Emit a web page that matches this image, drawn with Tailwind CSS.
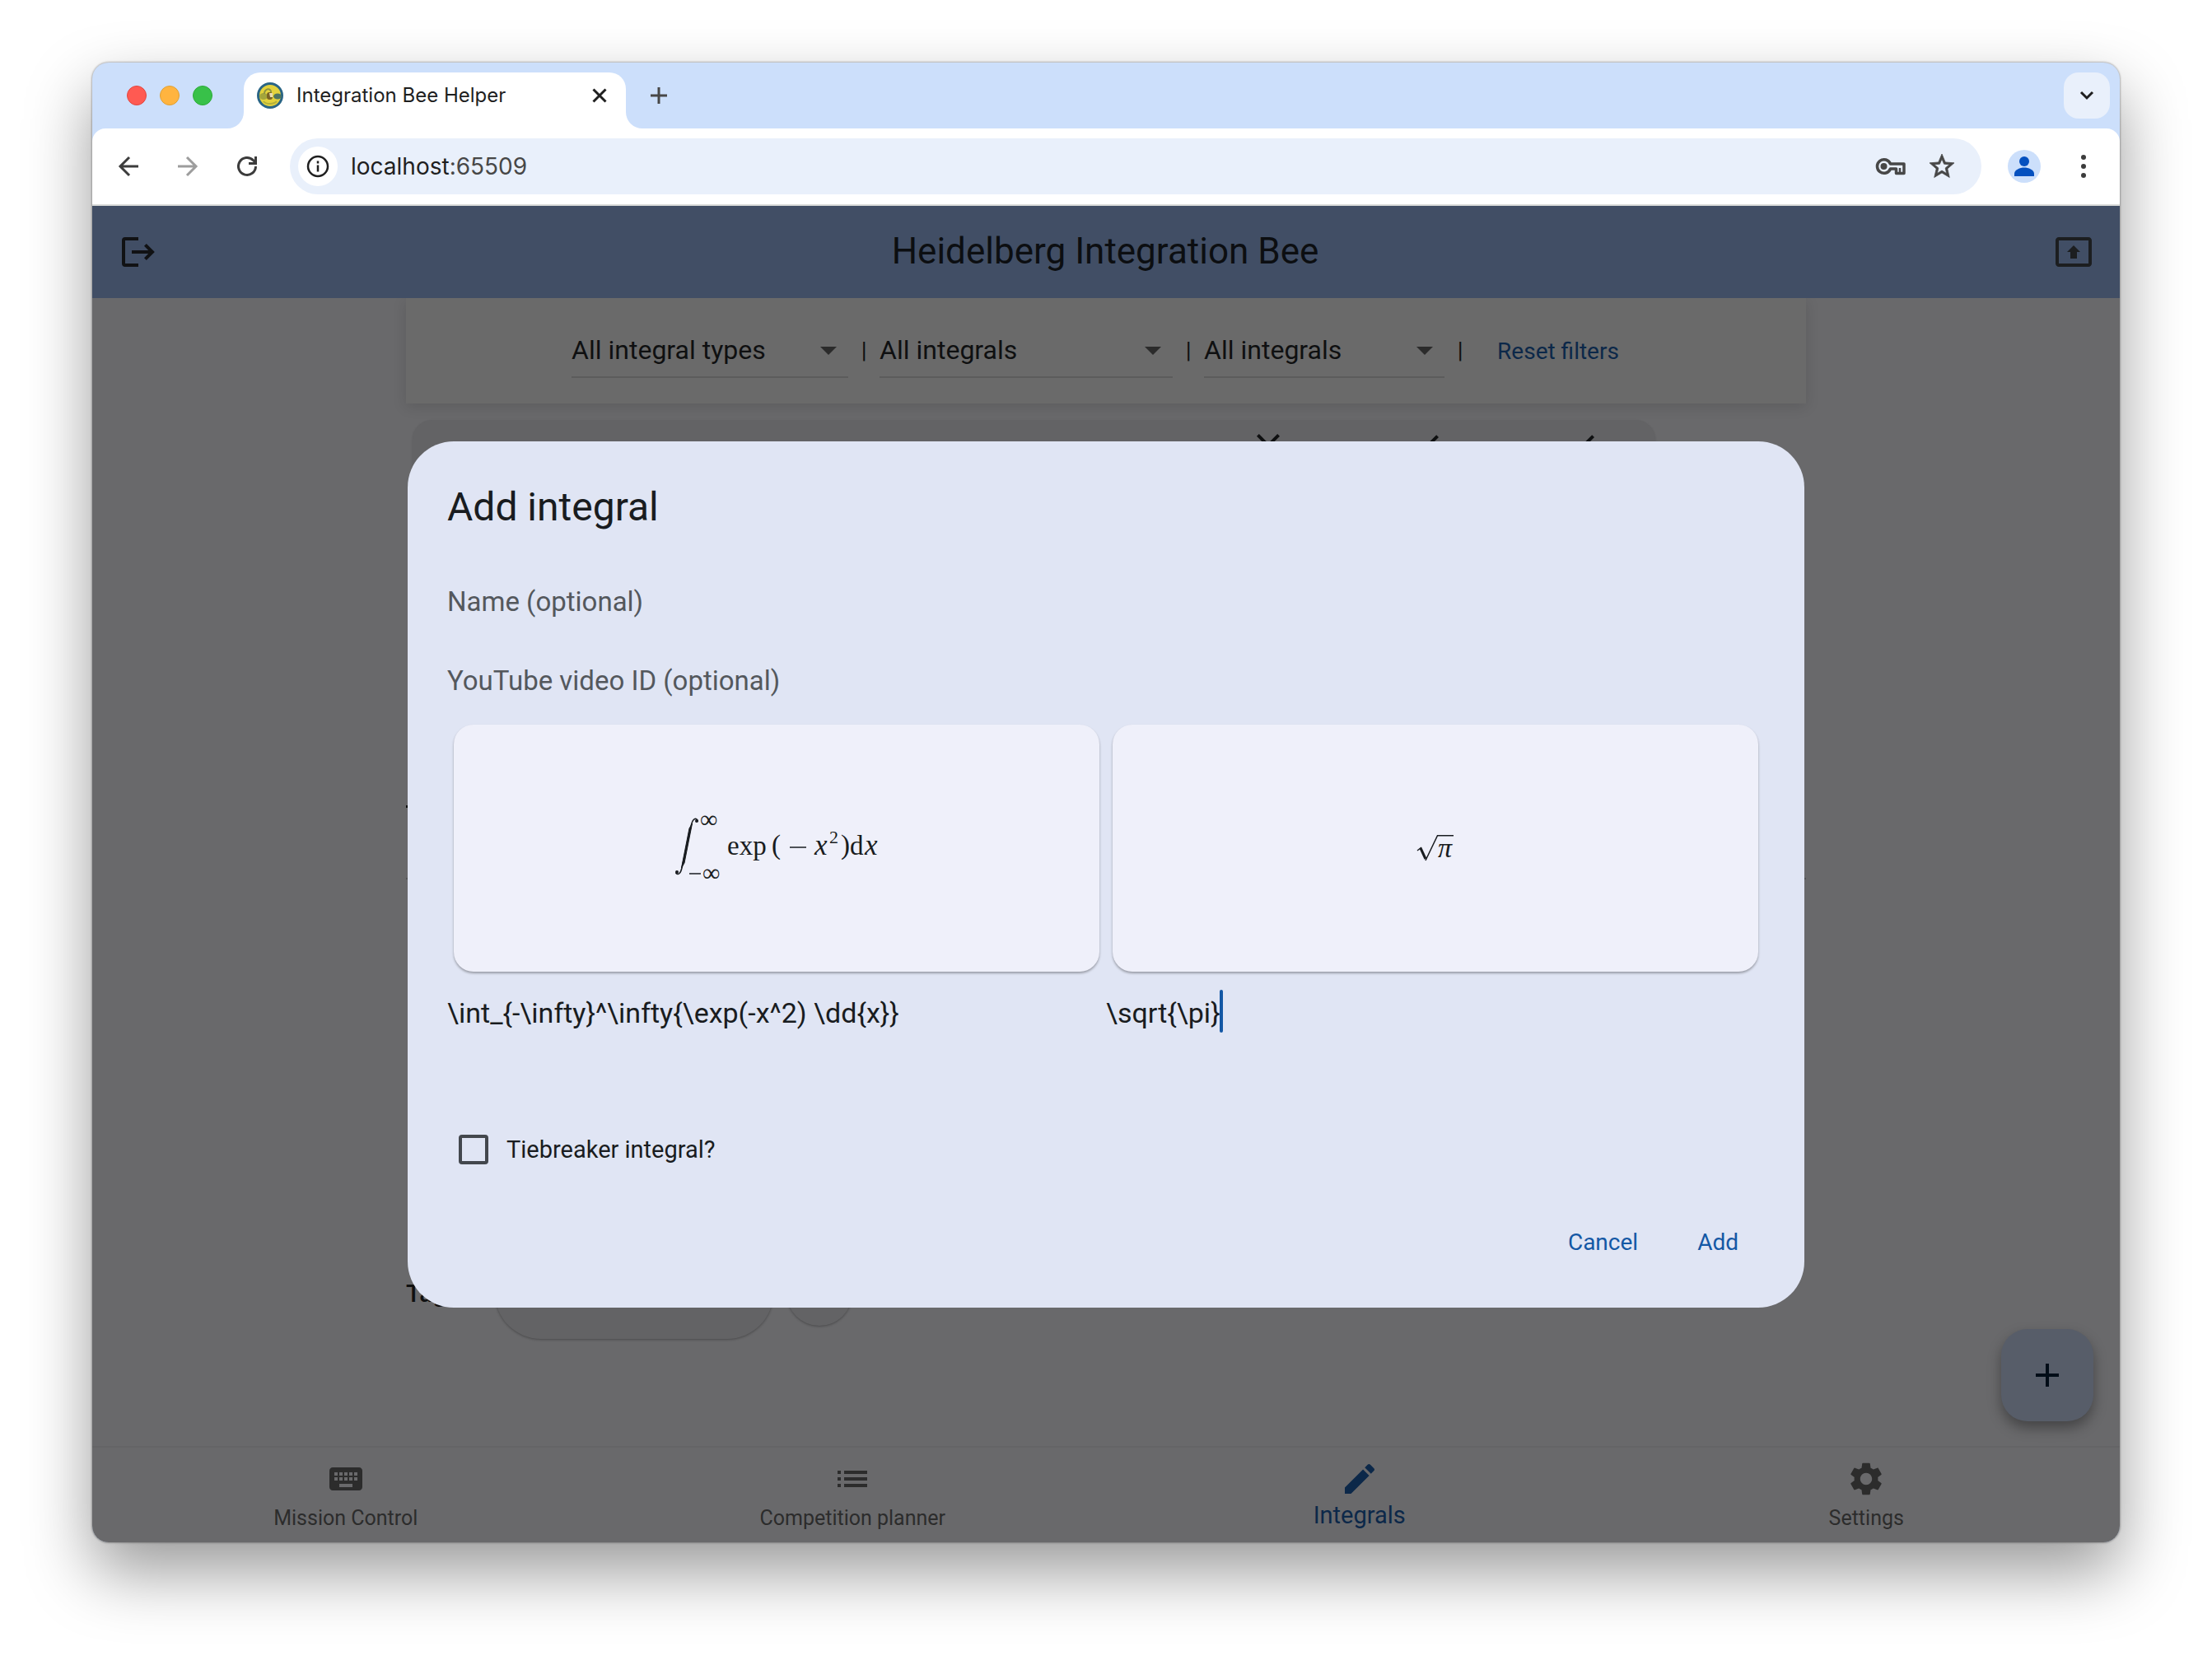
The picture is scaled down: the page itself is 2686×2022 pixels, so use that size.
<!DOCTYPE html>
<html lang="en">
<head>
<meta charset="utf-8">
<title>Integration Bee Helper</title>
<script src="https://cdn.jsdelivr.net/npm/@tailwindcss/browser@4"></script>
</head>
<body class="bg-white">
<div class="flex min-h-screen flex-col px-28 pt-[76px] pb-[149px] font-[Roboto,sans-serif] text-[#191c20]">
  <div class="relative flex flex-1 flex-col overflow-hidden rounded-[20px] bg-[#ccdffb] shadow-[0_0_2px_1px_rgba(0,0,0,0.25),0_36px_80px_rgba(0,0,0,0.4)]">

    <!-- Tab strip -->
    <header class="flex h-20 items-end pr-3 font-[Inter,sans-serif]">
      <div class="flex h-full w-[184px] items-center gap-4 pl-[42px]">
        <span class="size-6 rounded-full border border-[#e2463f] bg-[#ff5a52]"></span>
        <span class="size-6 rounded-full border border-[#e0a033] bg-[#ffb43f]"></span>
        <span class="size-6 rounded-full border border-[#2dab38] bg-[#38c149]"></span>
      </div>
      <div class="relative flex h-[68px] w-[464px] items-center rounded-t-[20px] bg-white pr-5 pb-3 pl-4">
        <svg class="absolute bottom-0 -left-5 size-5" viewBox="0 0 20 20" fill="#fff"><path d="M20 0v20H0A20 20 0 0 0 20 0z"/></svg>
        <svg class="absolute -right-5 bottom-0 size-5" viewBox="0 0 20 20" fill="#fff"><path d="M0 0v20h20A20 20 0 0 1 0 0z"/></svg>
        <svg class="size-8" viewBox="0 0 32 32"><circle cx="16" cy="16" r="14.500" fill="#e3d23c" stroke="#2a6585" stroke-width="3"/><ellipse cx="8" cy="17" rx="5" ry="4" fill="#a3a53c"/><ellipse cx="25" cy="17" rx="5" ry="3.500" fill="#4f7560"/><path d="M9 14c0-6 7-8 8-3v3" fill="none" stroke="#8d9440" stroke-width="2"/><rect x="12" y="12" width="7" height="9" rx="3" fill="#7b6424"/><path d="M15 13h4v5h-3z" fill="#e9dcb0"/><path d="M8 23c3 4 12 4 16 0" fill="none" stroke="#b4b13a" stroke-width="2"/></svg>
        <span class="ml-4 flex-1 text-2xl text-[#1f1f1f]">Integration Bee Helper</span>
        <button aria-label="Close tab" class="flex size-6 items-center justify-center"><svg class="size-6" viewBox="0 0 24 24" fill="none" stroke="#1f1f1f" stroke-width="3"><path d="M4.500 4.500l15 15M19.500 4.500l-15 15"/></svg></button>
      </div>
      <button aria-label="New tab" class="mb-6 ml-6 flex size-8 items-center justify-center"><svg class="size-6" viewBox="0 0 24 24" fill="none" stroke="#474747" stroke-width="3"><path d="M12 2v20M2 12h20"/></svg></button>
      <button aria-label="Search tabs" class="mb-3 ml-auto flex size-14 items-center justify-center rounded-[18px] bg-[#e9f0fb]"><svg class="size-6" viewBox="0 0 24 24" fill="none" stroke="#1f1f1f" stroke-width="3"><path d="M5 8l7 7 7-7"/></svg></button>
    </header>

    <!-- Toolbar -->
    <div class="flex h-[94px] items-center rounded-t-[16px] border-b-2 border-[#dadcda] bg-white pr-7 pl-7 font-[Inter,sans-serif]">
      <button aria-label="Back" class="size-8"><svg viewBox="0 0 32 32" fill="none" stroke="#3c3c3c" stroke-width="3"><path d="M28 16H6M17 5L6 16l11 11"/></svg></button>
      <button aria-label="Forward" class="ml-10 size-8"><svg viewBox="0 0 32 32" fill="none" stroke="#9d9d9d" stroke-width="3"><path d="M4 16h22M15 5l11 11-11 11"/></svg></button>
      <button aria-label="Reload" class="ml-10 size-8"><svg viewBox="0 0 32 32" fill="none" stroke="#3c3c3c" stroke-width="3"><path d="M26.500 16a10.500 10.500 0 1 1-3-7.400L26 11"/><path d="M26.500 4v8.500H18"/></svg></button>
      <div class="ml-9 flex h-[68px] flex-1 items-center rounded-full bg-[#e9f0fb] pr-[30px] pl-[10px]">
        <button aria-label="Site information" class="flex size-12 items-center justify-center rounded-full bg-white"><svg class="size-7" viewBox="0 0 28 28" fill="none" stroke="#1f1f1f" stroke-width="2.500"><circle cx="14" cy="14" r="12"/><path d="M14 12.500v8M14 7.500v3"/></svg></button>
        <span class="ml-4 text-[28px] text-[#1f1f1f]">localhost<span class="text-[#474747]">:65509</span></span>
        <button aria-label="Passwords" class="ml-auto h-6 w-10"><svg viewBox="0 0 40 24" fill="none" stroke="#474747" stroke-width="3.500"><path d="M19.500 9a8.300 8.300 0 1 0 0 6h7v5.500h9.500V9z" stroke-linejoin="round"/><circle cx="11.500" cy="12" r="4" fill="#474747" stroke="none"/><path d="M31 14v6" stroke-width="2.500"/></svg></button>
        <button aria-label="Bookmark" class="ml-6 size-9"><svg viewBox="0 0 24 24" fill="#474747" stroke="#474747" stroke-width=".5"><path d="M22 9.240l-7.190-.62L12 2 9.190 8.630 2 9.240l5.460 4.730L5.820 21 12 17.270 18.180 21l-1.630-7.030L22 9.240zM12 15.400l-3.760 2.270 1-4.280-3.320-2.880 4.380-.38L12 6.100l1.710 4.040 4.380.38-3.320 2.880 1 4.280L12 15.400z"/></svg></button>
      </div>
      <button aria-label="Profile" class="ml-8 flex size-10 rounded-full bg-[#ccdffb]"><svg viewBox="0 0 40 40" fill="#0450bf"><circle cx="20" cy="14" r="6"/><path d="M8 32v-3c0-5 7-7.500 12-7.500S32 24 32 29v3z"/></svg></button>
      <button aria-label="Menu" class="ml-9 size-8"><svg viewBox="0 0 32 32" fill="#3c3c3c"><circle cx="16" cy="5" r="3"/><circle cx="16" cy="16" r="3"/><circle cx="16" cy="27" r="3"/></svg></button>
    </div>

    <!-- App behind the dialog, already darkened by the scrim -->
    <div class="flex flex-1 flex-col bg-[#69696b] text-[#0f1011]">
      <div class="relative z-10 flex h-28 items-center justify-between bg-[#414e65] pr-8 pl-[30px]">
        <button aria-label="Log out" class="size-12"><svg viewBox="0 0 24 24" fill="none" stroke="#111214" stroke-width="2"><path d="M13 4H5a1 1 0 0 0-1 1v14a1 1 0 0 0 1 1h8M9 12h12M17.200 7.700L21.500 12l-4.300 4.300"/></svg></button>
        <h1 class="pb-0.5 text-[44px] leading-none text-[#0c0e11]">Heidelberg Integration Bee</h1>
        <button aria-label="Present" class="size-12"><svg viewBox="0 0 24 24" fill="#1c1e20"><path d="M21 3H3c-1.110 0-2 .89-2 2v14c0 1.110.89 2 2 2h18c1.110 0 2-.89 2-2V5c0-1.110-.89-2-2-2zm0 16.020H3V4.980h18v14.040zM10 12H8l4-4 4 4h-2v4h-4v-4z"/></svg></button>
      </div>

      <main class="mx-auto flex w-full max-w-[1700px] flex-1 flex-col">
        <div class="flex h-32 items-center justify-center bg-[#6a6a6a] text-[32px] shadow-[0_4px_16px_rgba(0,0,0,0.12)]">
          <div class="relative w-[336px] border-b-2 border-[#5c5c5c]">
            <select aria-label="Integral type" class="h-16 w-full appearance-none bg-transparent"><option>All integral types</option></select>
            <svg class="pointer-events-none absolute top-7 right-[14px] h-[10px] w-5" viewBox="0 0 20 10" fill="#2b2b2b"><path d="M0 0h20L10 10z"/></svg>
          </div>
          <span class="w-[38px] text-center text-[28px]">|</span>
          <div class="relative w-[356px] border-b-2 border-[#5c5c5c]">
            <select aria-label="Usage" class="h-16 w-full appearance-none bg-transparent"><option>All integrals</option></select>
            <svg class="pointer-events-none absolute top-7 right-[14px] h-[10px] w-5" viewBox="0 0 20 10" fill="#2b2b2b"><path d="M0 0h20L10 10z"/></svg>
          </div>
          <span class="w-[38px] text-center text-[28px]">|</span>
          <div class="relative w-[292px] border-b-2 border-[#5c5c5c]">
            <select aria-label="Status" class="h-16 w-full appearance-none bg-transparent"><option>All integrals</option></select>
            <svg class="pointer-events-none absolute top-7 right-[14px] h-[10px] w-5" viewBox="0 0 20 10" fill="#2b2b2b"><path d="M0 0h20L10 10z"/></svg>
          </div>
          <span class="w-[38px] text-center text-[28px]">|</span>
          <button class="px-[26px] pt-0.5 text-[28px] text-[#0c2849]">Reset filters</button>
        </div>

        <section class="mt-5 mr-[183px] ml-2 flex h-[420px] justify-end rounded-[24px] bg-[#636365] pt-[7px] pr-[68px] shadow-[0_1px_3px_rgba(0,0,0,0.12)]">
          <svg class="size-12" viewBox="0 0 24 24" fill="#0f1011"><path d="M19 6.410L17.590 5 12 10.590 6.410 5 5 6.410 10.590 12 5 17.590 6.410 19 12 13.410 17.590 19 19 17.590 13.410 12z"/></svg>
          <svg class="ml-[141px] size-12" viewBox="0 0 24 24" fill="#0f1011"><path d="M9 16.170L4.830 12l-1.420 1.410L9 19 21 7l-1.410-1.410z"/></svg>
          <svg class="ml-[141px] size-12" viewBox="0 0 24 24" fill="#0f1011"><path d="M9 16.170L4.830 12l-1.420 1.410L9 19 21 7l-1.410-1.410z"/></svg>
        </section>
        <div class="mt-12 h-[3px] w-5 bg-[#0f1011]"></div>
        <hr class="mt-[85px] border-t-2 border-[#555557]">
        <div class="mt-[446px] flex items-center text-[30px] font-medium">
          <span class="w-[108px]">Tags:</span>
          <span class="h-28 w-[338px] rounded-full bg-[#636365] shadow-[0_1px_3px_rgba(0,0,0,0.3)]"></span>
          <span class="ml-4 size-20 rounded-full bg-[#636365] shadow-[0_1px_3px_rgba(0,0,0,0.3)]"></span>
        </div>
      </main>

      <nav class="relative grid h-[117px] grid-cols-4 border-t-2 border-[#646466] text-[25px] text-[#2c2c2c]">
        <button aria-label="Add integral" class="absolute right-8 bottom-[147px] flex size-28 items-center justify-center rounded-[32px] bg-[#575d69] shadow-[0_8px_16px_rgba(0,0,0,0.35)]"><svg class="size-12" viewBox="0 0 24 24" fill="#020d18"><path d="M19 13h-6v6h-2v-6H5v-2h6V5h2v6h6v2z"/></svg></button>
        <a href="#control" class="flex flex-col items-center pt-[14px]">
          <svg class="size-12" viewBox="0 0 24 24" fill="currentColor"><path d="M20 5H4c-1.100 0-1.990.9-1.990 2L2 17c0 1.100.9 2 2 2h16c1.100 0 2-.9 2-2V7c0-1.100-.9-2-2-2zm-9 3h2v2h-2V8zm0 3h2v2h-2v-2zM8 8h2v2H8V8zm0 3h2v2H8v-2zm-1 2H5v-2h2v2zm0-3H5V8h2v2zm9 7H8v-2h8v2zm0-4h-2v-2h2v2zm0-3h-2V8h2v2zm3 3h-2v-2h2v2zm0-3h-2V8h2v2z"/></svg>
          <span class="mt-2 leading-8">Mission Control</span>
        </a>
        <a href="#planner" class="flex flex-col items-center pt-[14px]">
          <svg class="size-12" viewBox="0 0 24 24" fill="currentColor"><path d="M3 13h2v-2H3v2zm0 4h2v-2H3v2zm0-8h2V7H3v2zm4 4h14v-2H7v2zm0 4h14v-2H7v2zM7 7v2h14V7H7z"/></svg>
          <span class="mt-2 leading-8">Competition planner</span>
        </a>
        <a href="#integrals" aria-current="page" class="flex flex-col items-center pt-[14px] text-[29px] text-[#0c2849]">
          <svg class="size-12" viewBox="0 0 24 24" fill="currentColor"><path d="M3 17.250V21h3.750L17.810 9.940l-3.750-3.750L3 17.250zM20.710 7.040c.39-.39.39-1.020 0-1.410l-2.340-2.340c-.39-.39-1.020-.39-1.410 0l-1.830 1.830 3.750 3.750 1.830-1.830z"/></svg>
          <span class="mt-1 leading-8">Integrals</span>
        </a>
        <a href="#settings" class="flex flex-col items-center pt-[14px]">
          <svg class="size-12" viewBox="0 0 24 24" fill="currentColor"><path d="M19.140 12.940c.04-.3.06-.61.06-.94 0-.32-.02-.64-.07-.94l2.030-1.580c.18-.14.23-.41.12-.61l-1.920-3.320c-.12-.22-.37-.29-.59-.22l-2.390.96c-.5-.38-1.030-.7-1.620-.94l-.36-2.540c-.04-.24-.24-.41-.48-.41h-3.840c-.24 0-.43.17-.47.41l-.36 2.540c-.59.24-1.130.57-1.620.94l-2.390-.96c-.22-.08-.47 0-.59.22L2.740 8.870c-.12.21-.08.47.12.61l2.030 1.580c-.05.3-.09.63-.09.94s.02.64.07.94l-2.030 1.580c-.18.14-.23.41-.12.61l1.920 3.320c.12.22.37.29.59.22l2.390-.96c.5.38 1.030.7 1.620.94l.36 2.540c.05.24.24.41.48.41h3.840c.24 0 .44-.17.47-.41l.36-2.540c.59-.24 1.130-.56 1.620-.94l2.390.96c.22.08.47 0 .59-.22l1.920-3.320c.12-.22.07-.47-.12-.61l-2.010-1.580zM12 15.600c-1.980 0-3.600-1.620-3.600-3.600s1.620-3.600 3.600-3.600 3.600 1.620 3.600 3.600-1.620 3.600-3.600 3.600z"/></svg>
          <span class="mt-2 leading-8">Settings</span>
        </a>
      </nav>
    </div>

    <!-- Dialog -->
    <div class="pointer-events-none absolute inset-x-0 top-[460px] z-20 flex justify-center">
      <form role="dialog" aria-labelledby="dialog-title" class="pointer-events-auto flex w-full max-w-[1696px] flex-col rounded-[56px] bg-[#e0e5f4] p-12 text-[34px]">
        <h2 id="dialog-title" class="mb-8 text-[48px] leading-[64px]">Add integral</h2>
        <input aria-label="Name" placeholder="Name (optional)" class="h-24 bg-transparent pt-1 text-[33px] placeholder:text-[#54585d]">
        <input aria-label="YouTube video ID" placeholder="YouTube video ID (optional)" class="h-24 bg-transparent pt-1 text-[33px] placeholder:text-[#54585d]">
        <div class="grid grid-cols-2">
          <div class="flex flex-col">
            <div class="m-2 flex h-[300px] items-center justify-center rounded-[24px] bg-[#eff0fa] shadow-[0_2px_3px_rgba(0,0,0,0.32)]">
              <svg class="h-[100px] w-[248px] overflow-visible font-['Liberation_Serif',serif]" viewBox="0 -12 248 100" fill="#191c20" font-size="32">
                <path d="M28.500 5.500c-1.500-5-6-4.500-8 4L9 62c-1.500 6.500-4.500 9.500-7.500 6" fill="none" stroke="#191c20" stroke-width="1.500"/>
                <path d="M21.500 8L12 56 8.500 62 18 14z" stroke="#191c20" stroke-width="1"/>
                <circle cx="27" cy="5" r="2"/><circle cx="3" cy="67" r="2"/>
                <text x="31" y="13" font-size="30">∞</text>
                <path d="M18 69h14" stroke="#191c20" stroke-width="1.500"/>
                <text x="34" y="78" font-size="30">∞</text>
                <text x="64" y="46" font-size="33">exp</text>
                <text x="118" y="45" font-size="33">(</text>
                <path d="M140 37h20" stroke="#191c20" stroke-width="1.500"/>
                <text x="170" y="46" font-style="italic" font-size="35">x</text>
                <text x="188" y="32" font-size="22">2</text>
                <text x="202" y="45" font-size="33">)</text>
                <text x="213" y="46" font-size="33">d</text>
                <text x="231" y="46" font-style="italic" font-size="35">x</text>
              </svg>
            </div>
            <input aria-label="Integral in LaTeX" value="\int_{-\infty}^\infty{\exp(-x^2) \dd{x}}" class="h-20 bg-transparent pt-1">
          </div>
          <div class="flex flex-col">
            <div class="m-2 flex h-[300px] items-center justify-center rounded-[24px] bg-[#eff0fa] shadow-[0_2px_3px_rgba(0,0,0,0.32)]">
              <svg class="h-8 w-11 overflow-visible font-['Liberation_Serif',serif]" viewBox="0 0 44 32" fill="none" stroke="#191c20">
                <path d="M0 19l5-4" stroke-width="1.500"/><path d="M4 16l6 13" stroke-width="3"/><path d="M10 31L24.500.75H44" stroke-width="1.500"/>
                <text x="25" y="27" font-size="34" font-style="italic" fill="#191c20" stroke="none">π</text>
              </svg>
            </div>
            <div class="flex h-20 items-center">
              <input aria-label="Solution in LaTeX" value="\sqrt{\pi}" class="h-20 w-[138px] bg-transparent pt-1">
              <span class="h-[52px] w-1 rounded-full bg-[#1458a5]"></span>
            </div>
          </div>
        </div>
        <div class="mt-[88px] flex h-20 items-center pl-[14px] text-[29px]">
          <input id="tiebreaker" type="checkbox" class="size-9 appearance-none rounded-[4px] border-4 border-[#43474d]">
          <label for="tiebreaker" class="ml-[22px] pt-0.5">Tiebreaker integral?</label>
        </div>
        <div class="mt-10 flex justify-end gap-2 text-[28px] text-[#1458a5]">
          <button type="button" class="h-16 px-8 pt-0.5">Cancel</button>
          <button type="button" class="h-16 px-8 pt-0.5">Add</button>
        </div>
      </form>
    </div>
  </div>
</div>
</body>
</html>
